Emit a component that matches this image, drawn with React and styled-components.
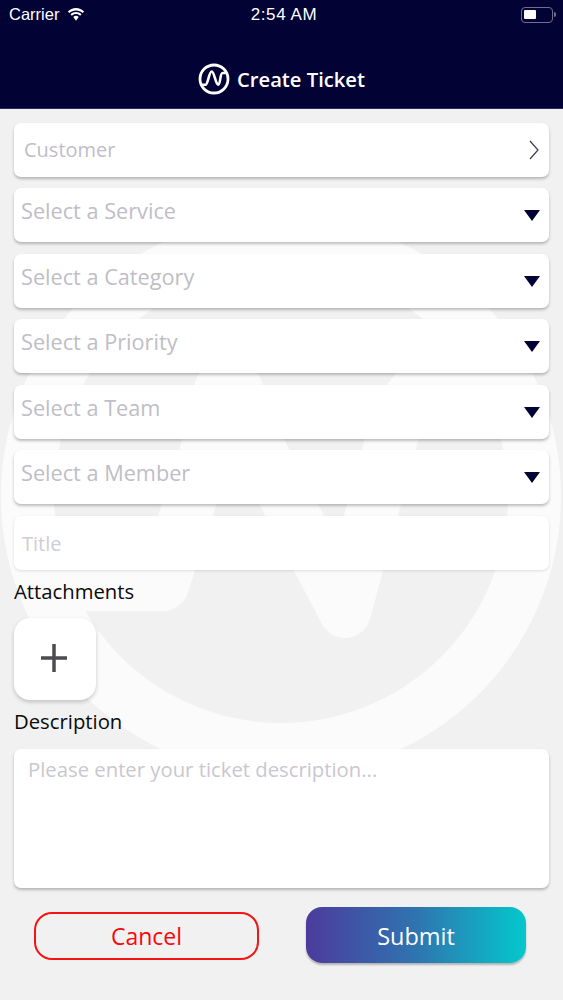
import React from "react";
import styled, { createGlobalStyle } from "styled-components";

const Global = createGlobalStyle`
  html, body { margin: 0; padding: 0; }
  body { background: #f1f1f2; font-family: "Open Sans", sans-serif; }
`;

const Screen = styled.div`
  position: relative;
  width: 563px;
  height: 1000px;
  overflow: hidden;
  background: #f1f1f2;
`;

const Watermark = styled.svg`
  position: absolute;
  left: 0;
  top: 0;
`;

const Header = styled.header`
  position: relative;
  box-sizing: border-box;
  height: 109px;
  background: #020235;
  border-bottom: 1px solid #2a2a5e;
  color: #fff;
`;

const StatusBar = styled.div`
  display: grid;
  grid-template-columns: 1fr auto 1fr;
  align-items: center;
  height: 29px;
  padding: 0 7px 0 9px;
  font-family: "Liberation Sans", Arial, sans-serif;
  font-size: 16.5px;
`;

const Carrier = styled.div`
  display: flex;
  align-items: center;
  gap: 8px;
`;

const Clock = styled.div`
  font-size: 17px;
  letter-spacing: 0.6px;
  padding-left: 3px;
`;

const Battery = styled.div`
  justify-self: end;
  display: flex;
  align-items: center;
`;

const BatteryBody = styled.div`
  box-sizing: border-box;
  width: 32px;
  height: 16px;
  padding: 2px;
  border: 1.5px solid #6f6f92;
  border-radius: 4px;
`;

const BatteryFill = styled.div`
  width: 12px;
  height: 9px;
  background: #fff;
  border-radius: 1px;
`;

const BatteryCap = styled.div`
  width: 2px;
  height: 5px;
  margin-left: 1px;
  background: #6f6f92;
  border-radius: 0 2px 2px 0;
`;

const TitleRow = styled.div`
  display: flex;
  align-items: center;
  justify-content: center;
  gap: 7px;
  margin-top: 34px;
  font-size: 20.2px;
  font-weight: 600;
  line-height: 32px;
`;

const Form = styled.main`
  position: relative;
  display: flex;
  flex-direction: column;
  padding: 13.6px 14px 0;
`;

const Fields = styled.div`
  display: flex;
  flex-direction: column;
  gap: 11.5px;
`;

const Field = styled.div`
  box-sizing: border-box;
  display: flex;
  justify-content: space-between;
  height: 54px;
  padding: ${(p) => p.$pad};
  background: #fff;
  border-radius: 7px;
  box-shadow: ${(p) => (p.$flat ? "0 1px 3px rgba(0, 0, 0, 0.12)" : "0 2px 3px rgba(0, 0, 0, 0.25)")};
`;

const Placeholder = styled.span`
  color: ${(p) => p.$color || "#bfbdc6"};
  font-size: ${(p) => p.$size || 21.7}px;
  line-height: 30px;
`;

const Caret = styled.span`
  align-self: flex-start;
  width: 0;
  height: 0;
  margin-top: 14px;
  border-left: 8px solid transparent;
  border-right: 8px solid transparent;
  border-top: 11px solid #020235;
`;

const ChevronIcon = styled.svg`
  margin-top: 5px;
`;

const Label = styled.div`
  margin-top: ${(p) => p.$top}px;
  color: #0a0a0a;
  font-size: 20.3px;
  line-height: 30px;
`;

const AddButton = styled.div`
  box-sizing: border-box;
  display: flex;
  align-items: center;
  justify-content: center;
  width: 82px;
  height: 82px;
  margin-top: 12px;
  padding: 0 2px 2px 0;
  background: #fff;
  border-radius: 16px;
  box-shadow: 0 2px 4px rgba(0, 0, 0, 0.2);
`;

const DescriptionBox = styled.div`
  box-sizing: border-box;
  height: 139px;
  margin-top: 13px;
  padding: 5px 14px;
  background: #fff;
  border-radius: 7px;
  box-shadow: 0 2px 3px rgba(0, 0, 0, 0.25);
`;

const Actions = styled.div`
  display: flex;
  align-items: center;
  justify-content: space-between;
  margin-top: 19px;
  padding: 0 23px 0 20px;
`;

const CancelButton = styled.div`
  box-sizing: border-box;
  width: 225px;
  height: 48px;
  margin-top: 2px;
  border: 2px solid #f51414;
  border-radius: 18px;
  color: #f50a0a;
  font-size: 23px;
  line-height: 45px;
  text-align: center;
`;

const SubmitButton = styled.div`
  width: 220px;
  height: 56px;
  border-radius: 16px;
  background: linear-gradient(90deg, #4c3b9c 0%, #2f74b0 50%, #04c8cc 100%);
  box-shadow: 0 2px 2px rgba(0, 0, 0, 0.25);
  color: #fff;
  font-size: 23.5px;
  line-height: 58px;
  text-align: center;
`;

const Logo = () => (
  <svg width="32" height="32" viewBox="0 0 32 32" fill="none" stroke="#fff">
    <circle cx="16" cy="16" r="14" strokeWidth="2.8" />
    <path
      d="M3 21.7 H7.5 C10 21.7 11 8.5 13.7 8.5 C16.5 8.5 17.5 21.7 20.3 21.7 C22.5 21.7 22 10 24.5 10 H29"
      strokeWidth="2.6"
    />
  </svg>
);

const Wifi = () => (
  <svg width="18" height="14" viewBox="0 0 18 14" fill="#fff">
    <path d="M9 2.4c2.6 0 4.9 1 6.7 2.7l1.4-1.5C15 1.4 12.2 0 9 0S3 1.4.9 3.6l1.4 1.5C4.1 3.4 6.4 2.4 9 2.4z" />
    <path d="M9 6.1c1.6 0 3 .6 4.1 1.6l1.4-1.5C13 4.8 11.1 4 9 4S5 4.8 3.5 6.2l1.4 1.5C6 6.7 7.4 6.1 9 6.1z" />
    <path d="M9 7.8c-1.1 0-2 .4-2.7 1.1L9 12.8l2.7-3.9C11 8.2 10.1 7.8 9 7.8z" />
  </svg>
);

const Chevron = () => (
  <ChevronIcon width="12" height="20" viewBox="0 0 12 20" fill="none" stroke="#3a3a4a" strokeWidth="1.2">
    <path d="M2 1 L10 10 L2 19" />
  </ChevronIcon>
);

const Plus = () => (
  <svg width="26" height="28" viewBox="0 0 26 28" fill="#4c4c52">
    <rect x="11.25" y="0" width="3.5" height="28" />
    <rect x="0" y="12.25" width="26" height="3.5" />
  </svg>
);

const selects = ["Select a Service", "Select a Category", "Select a Priority", "Select a Team", "Select a Member"];

export default function App() {
  return (
    <Screen>
      <Global />
      <Watermark width="563" height="1000" viewBox="0 0 563 1000" fill="none" stroke="#fbfbfc">
        <circle cx="281" cy="496" r="253.5" strokeWidth="53" />
        <path
          d="M30 585 H163 L205 455 C215 410 218 381 228 381 C238 381 243 410 255 440 L345 612 L390 445 C398 410 415 378 445 378 H500"
          strokeWidth="52"
          strokeLinejoin="round"
        />
      </Watermark>
      <Header>
        <StatusBar>
          <Carrier>
            Carrier
            <Wifi />
          </Carrier>
          <Clock>2:54 AM</Clock>
          <Battery>
            <BatteryBody>
              <BatteryFill />
            </BatteryBody>
            <BatteryCap />
          </Battery>
        </StatusBar>
        <TitleRow>
          <Logo />
          Create Ticket
        </TitleRow>
      </Header>
      <Form>
        <Fields>
          <Field $pad="12px 9px 0 10px">
            <Placeholder $size={20}>Customer</Placeholder>
            <Chevron />
          </Field>
          {selects.map((s) => (
            <Field key={s} $pad="8px 9px 0 7px">
              <Placeholder>{s}</Placeholder>
              <Caret />
            </Field>
          ))}
          <Field $flat $pad="13px 8px 0">
            <Placeholder $color="#cfcdd4" $size={20}>Title</Placeholder>
          </Field>
        </Fields>
        <Label $top={6.4}>Attachments</Label>
        <AddButton>
          <Plus />
        </AddButton>
        <Label $top={6}>Description</Label>
        <DescriptionBox>
          <Placeholder $color="#c9c7cf" $size={20.3}>Please enter your ticket description...</Placeholder>
        </DescriptionBox>
        <Actions>
          <CancelButton>Cancel</CancelButton>
          <SubmitButton>Submit</SubmitButton>
        </Actions>
      </Form>
    </Screen>
  );
}
